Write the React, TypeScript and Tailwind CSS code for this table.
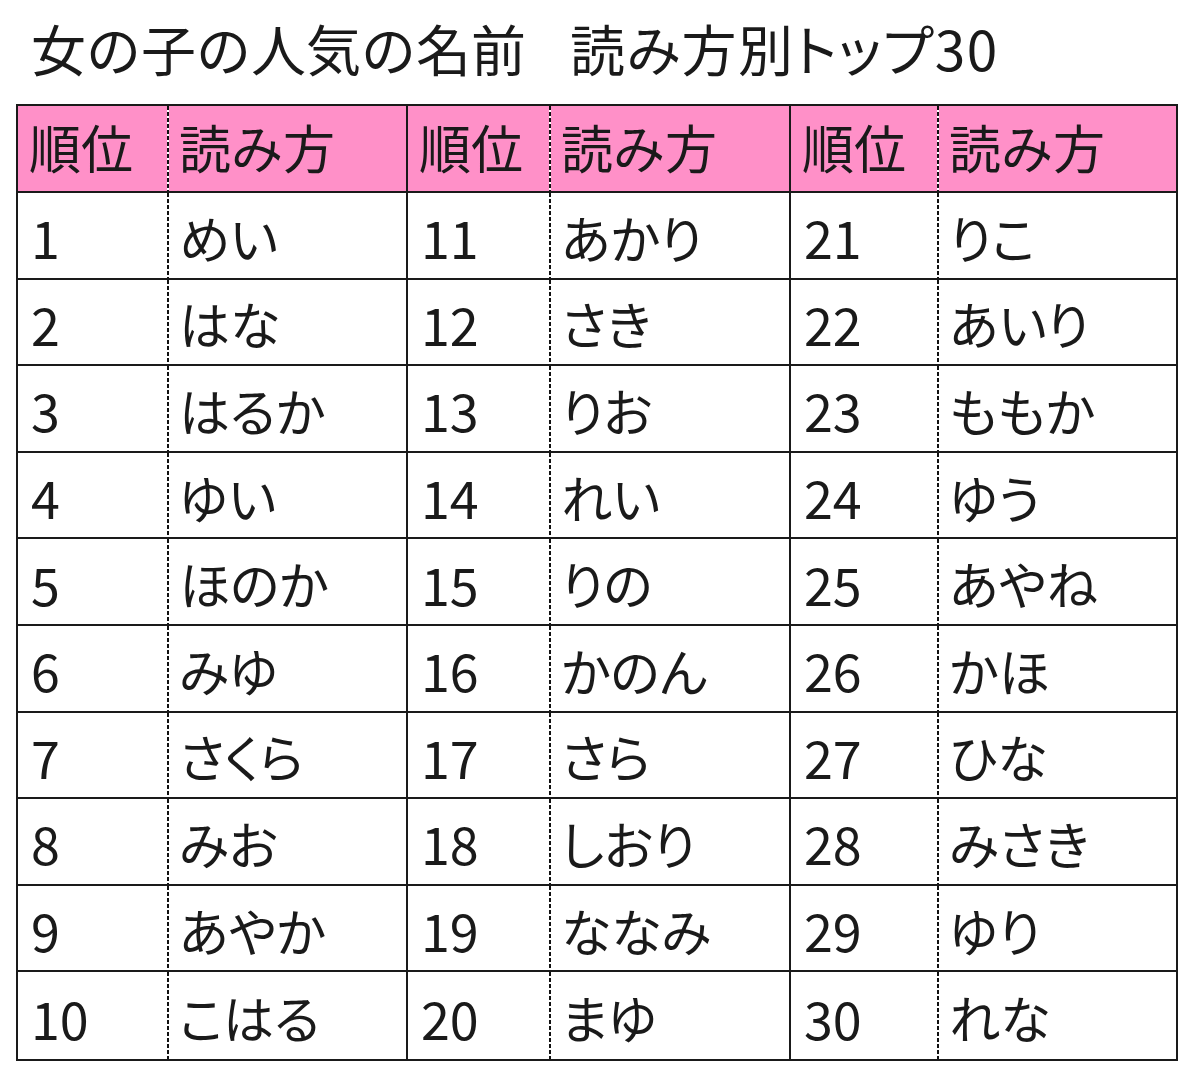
import React from "react";

const a = ["めい","はな","はるか","ゆい","ほのか","みゆ","さくら","みお","あやか","こはる"];
const b = ["あかり","さき","りお","れい","りの","かのん","さら","しおり","ななみ","まゆ"];
const c = ["りこ","あいり","ももか","ゆう","あやね","かほ","ひな","みさき","ゆり","れな"];

const groupW = ["w-[390px] border-r-2", "w-[383px] border-r-2", "w-[385px]"];
const rankW = ["w-[149px]", "w-[141px]", "w-[146px]"];

function Dots({ header }: { header?: boolean }) {
  return (
    <div
      className={
        header
          ? "w-[2px] self-stretch bg-[linear-gradient(to_bottom,#111111_0px,#111111_4px,#ffffff_4px,#ffffff_6px)] bg-[length:2px_6px]"
          : "w-[2px] self-stretch bg-[linear-gradient(to_bottom,#111111_0px,#111111_4px,transparent_4px,transparent_6px)] bg-[length:2px_6px]"
      }
    />
  );
}

export default function App() {
  const rows = a.map((_, i) => [
    [i + 1, a[i]],
    [i + 11, b[i]],
    [i + 21, c[i]],
  ] as [number, string][]);
  return (
    <div
      className="w-[1200px] h-[1087px] bg-white text-[#1a1a1a] pl-[16px]"
      style={{ fontFamily: '"Noto Sans CJK JP", "Noto Sans", sans-serif' }}
    >
      <div className="pt-[20px] pl-[15px] text-[55px] leading-[55px] whitespace-pre flex">
        <span>女の子の人気の名前</span>
        <span className="ml-[44px] tracking-[1.4px] [font-feature-settings:'palt']">読み方別トップ30</span>
      </div>
      <div className="mt-[29px] w-[1162px] border-2 border-[#1a1a1a] flex flex-col text-[52px] leading-none">
        <div className="flex h-[87px] bg-[#ff90c8] border-b-2 border-[#1a1a1a]">
          {[0, 1, 2].map((g) => (
            <div key={g} className={`flex border-[#1a1a1a] ${groupW[g]}`}>
              <div className={`${rankW[g]} flex items-center pl-[11px] pb-[4px]`}>順位</div>
              <Dots header />
              <div className="flex-1 flex items-center pl-[10px] pb-[4px]">読み方</div>
            </div>
          ))}
        </div>
        {rows.map((r, i) => (
          <div
            key={i}
            className={`flex h-[86.6px] ${i < rows.length - 1 ? "border-b-2" : ""} border-[#1a1a1a]`}
          >
            {r.map(([n, s], g) => (
              <div key={g} className={`flex border-[#1a1a1a] ${groupW[g]}`}>
                <div className={`${rankW[g]} flex items-center pl-[13px] pt-[4px]`}>{n}</div>
                <Dots />
                <div className="flex-1 flex items-center pl-[10px] pt-[4px] text-[51px] [font-feature-settings:'palt']">{s}</div>
              </div>
            ))}
          </div>
        ))}
      </div>
    </div>
  );
}
